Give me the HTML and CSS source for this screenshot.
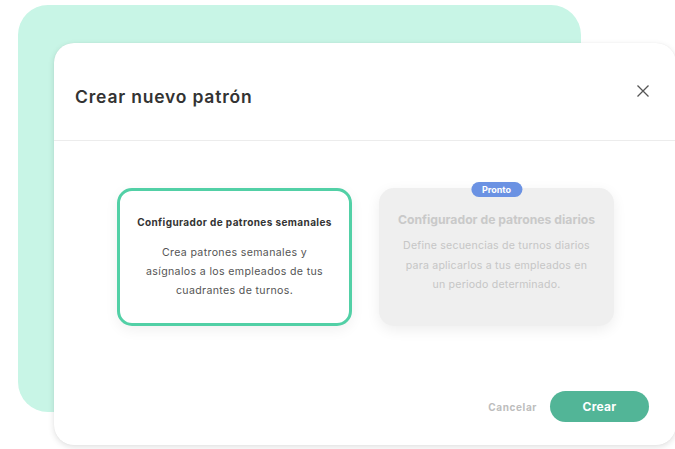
FILE: index.html
```html
<!DOCTYPE html>
<html lang="es">
<head>
<meta charset="utf-8">
<title>Crear nuevo patrón</title>
<link rel="stylesheet" href="styles.css">
</head>
<body>
<div class="stage">
  <div class="backdrop"></div>
  <section class="modal">
    <header class="modal-header">
      <h1 class="modal-title">Crear nuevo patrón</h1>
      <button class="close" aria-label="Cerrar">
        <svg width="14" height="14" viewBox="0 0 14 14"><path d="M1.5 1.5 L12.5 12.5 M12.5 1.5 L1.5 12.5" stroke="#555" stroke-width="1.3" fill="none"/></svg>
      </button>
    </header>
    <div class="modal-body">
      <div class="option option-active">
        <h2 class="option-title">Configurador de patrones semanales</h2>
        <p class="option-text">Crea patrones semanales y asígnalos a los empleados de tus cuadrantes de turnos.</p>
      </div>
      <div class="option option-disabled">
        <span class="badge">Pronto</span>
        <h2 class="option-title">Configurador de patrones diarios</h2>
        <p class="option-text">Define secuencias de turnos diarios para aplicarlos a tus empleados en un periodo determinado.</p>
      </div>
    </div>
    <footer class="modal-footer">
      <button class="btn-link">Cancelar</button>
      <button class="btn-primary">Crear</button>
    </footer>
  </section>
</div>
</body>
</html>
```
FILE: styles.css
```css
* { box-sizing: border-box; }

html, body {
  margin: 0;
  background: #ffffff;
  font-family: Inter, "Noto Sans", sans-serif;
  overflow: hidden;
}

.stage {
  display: grid;
  width: 675px;
  height: 449px;
}

.backdrop,
.modal {
  grid-area: 1 / 1;
}

.backdrop {
  margin: 5px 0 0 18px;
  width: 563px;
  height: 407px;
  background: #c8f5e6;
  border-radius: 30px;
}

.modal {
  margin: 43px 0 0 54px;
  width: 622px;
  height: 402px;
  background: #ffffff;
  border-radius: 20px;
  box-shadow: 0 2px 6px rgba(0, 0, 0, 0.12), 0 0 1px rgba(0, 0, 0, 0.08);
  display: flex;
  flex-direction: column;
}

.modal-header {
  height: 98px;
  flex: none;
  border-bottom: 1px solid #ececec;
  display: flex;
  align-items: center;
  justify-content: space-between;
  padding: 10px 26px 0 21px;
}

.modal-title {
  margin: 0;
  font-size: 17.5px;
  font-weight: 600;
  color: #333333;
  letter-spacing: 0.8px;
}

.close {
  border: 0;
  background: none;
  padding: 0;
  width: 14px;
  height: 14px;
  margin-top: -12px;
  display: flex;
}

.modal-body {
  flex: 1;
  display: flex;
  justify-content: center;
  align-items: flex-start;
  gap: 27px;
  padding: 47px 0 0 1px;
}

.option {
  position: relative;
  width: 235px;
  height: 138px;
  border-radius: 15px;
  text-align: center;
  display: flex;
  flex-direction: column;
  align-items: center;
}

.option-active {
  border: 3px solid #52d0a6;
  background: #ffffff;
  box-shadow: 0 4px 14px rgba(0, 0, 0, 0.06);
  padding: 25px 6px 0;
}

.option-active .option-title {
  font-size: 10px;
  font-weight: 700;
  color: #333333;
  letter-spacing: 0.4px;
  margin: 0 0 15px;
  white-space: nowrap;
}

.option-active .option-text {
  font-size: 10.6px;
  line-height: 19px;
  color: #555555;
  letter-spacing: 0.35px;
  margin: 0;
  max-width: 184px;
}

.option-disabled {
  background: #efefef;
  box-shadow: 0 4px 14px rgba(0, 0, 0, 0.07);
  padding: 24px 6px 0;
}

.option-disabled .option-title {
  font-size: 12.2px;
  font-weight: 700;
  color: #c9c9c9;
  margin: 0 0 9px;
  white-space: nowrap;
}

.option-disabled .option-text {
  font-size: 10.6px;
  line-height: 19.5px;
  color: #c6c6c6;
  letter-spacing: 0.2px;
  margin: 0;
  max-width: 192px;
}

/* "coming soon" tag sitting on the card's top edge */
.badge {
  position: absolute;
  top: -6px;
  left: 50%;
  transform: translateX(-50%);
  background: #6b92e3;
  color: #ffffff;
  font-size: 9px;
  font-weight: 700;
  line-height: 15px;
  padding: 0 11px;
  border-radius: 8px;
}

.modal-footer {
  flex: none;
  display: flex;
  justify-content: flex-end;
  align-items: center;
  gap: 13px;
  padding: 0 27px 23px 0;
}

.btn-link {
  border: 0;
  background: none;
  font-family: inherit;
  font-size: 10px;
  font-weight: 700;
  color: #bdbdbd;
  letter-spacing: 0.6px;
  padding: 0;
}

.btn-primary {
  border: 0;
  width: 99px;
  height: 31px;
  border-radius: 16px;
  background: #52b597;
  color: #ffffff;
  font-family: inherit;
  font-size: 12px;
  font-weight: 700;
  letter-spacing: 0.3px;
}
```
